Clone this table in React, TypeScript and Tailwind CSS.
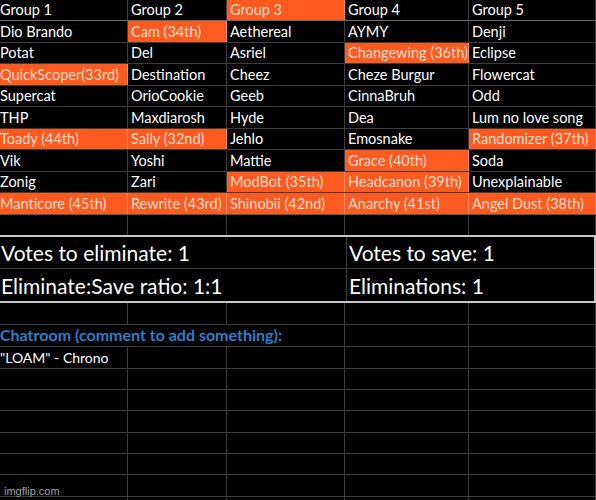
import React from 'react';

type Cell = { text: string; hot?: boolean };

const cols = 'grid grid-cols-[128px_99px_118px_124px_127px]';
const font = { fontFamily: 'Lato, "Open Sans", sans-serif' };

const header: Cell[] = [
  { text: 'Group 1' },
  { text: 'Group 2' },
  { text: 'Group 3', hot: true },
  { text: 'Group 4' },
  { text: 'Group 5' },
];

// orange = eliminated
const rows: Cell[][] = [
  [{ text: 'Dio Brando' }, { text: 'Cam (34th)', hot: true }, { text: 'Aethereal' }, { text: 'AYMY' }, { text: 'Denji' }],
  [{ text: 'Potat' }, { text: 'Del' }, { text: 'Asriel' }, { text: 'Changewing (36th)', hot: true }, { text: 'Eclipse' }],
  [{ text: 'QuickScoper(33rd)', hot: true }, { text: 'Destination' }, { text: 'Cheez' }, { text: 'Cheze Burgur' }, { text: 'Flowercat' }],
  [{ text: 'Supercat' }, { text: 'OrioCookie' }, { text: 'Geeb' }, { text: 'CinnaBruh' }, { text: 'Odd' }],
  [{ text: 'THP' }, { text: 'Maxdiarosh' }, { text: 'Hyde' }, { text: 'Dea' }, { text: 'Lum no love song' }],
  [{ text: 'Toady (44th)', hot: true }, { text: 'Sally (32nd)', hot: true }, { text: 'Jehlo' }, { text: 'Emosnake' }, { text: 'Randomizer (37th)', hot: true }],
  [{ text: 'Vik' }, { text: 'Yoshi' }, { text: 'Mattie' }, { text: 'Grace (40th)', hot: true }, { text: 'Soda' }],
  [{ text: 'Zonig' }, { text: 'Zari' }, { text: 'ModBot (35th)', hot: true }, { text: 'Headcanon (39th)', hot: true }, { text: 'Unexplainable' }],
  [{ text: 'Manticore (45th)', hot: true }, { text: 'Rewrite (43rd)', hot: true }, { text: 'Shinobii (42nd)', hot: true }, { text: 'Anarchy (41st)', hot: true }, { text: 'Angel Dust (38th)', hot: true }],
];
const rowHeights = ['h-[22px]', 'h-[21px]', 'h-[22px]', 'h-[21px]', 'h-[22px]', 'h-[21px]', 'h-[22px]', 'h-[21px]', 'h-[22px]'];
const tailHeights = ['h-[22px]', 'h-[22px]', 'h-[22px]', 'h-[21px]', 'h-[21px]', 'h-[22px]', 'h-[21px]', 'h-[21px]', 'h-[22px]', 'h-[22px]'];

function GridRow({ cells, h, bottom = 'border-[#3c3c3c]' }: { cells: Cell[]; h: string; bottom?: string }) {
  return (
    <div className={`${cols} ${h} border-b ${bottom}`}>
      {cells.map((c, i) => (
        <div
          key={i}
          className={`flex items-end overflow-hidden whitespace-nowrap border-r pb-[3px] text-[14.5px] leading-none ${
            i === 0 ? 'pl-0' : 'pl-[3px]'
          } ${c.hot ? 'bg-[#ff5a1f] text-[#ffdccb] border-[#ff8c60]' : 'text-white border-[#3c3c3c]'}`}
        >
          {c.text}
        </div>
      ))}
    </div>
  );
}

function EmptyRow({ h }: { h: string }) {
  return (
    <div className={`${cols} ${h} border-b border-[#3c3c3c]`}>
      {[0, 1, 2, 3, 4].map(i => (
        <div key={i} className="border-r border-[#3c3c3c]" />
      ))}
    </div>
  );
}

export default function App() {
  return (
    <div className="relative w-[596px] h-[500px] overflow-hidden bg-black" style={font}>
      <GridRow cells={header} h="h-[21px]" bottom="border-[#6b6b6b]" />
      {rows.map((r, i) => (
        <GridRow key={i} cells={r} h={rowHeights[i]} bottom={i === rows.length - 1 ? 'border-[#5a5a5a]' : 'border-[#3c3c3c]'} />
      ))}

      {/* blank row above the box */}
      <div className={`${cols} h-[20px]`}>
        {[0, 1, 2, 3, 4].map(i => (
          <div key={i} className="border-r border-[#3c3c3c]" />
        ))}
      </div>

      {/* vote totals */}
      <div className="-ml-[2px] w-[598px] border-2 border-[#c8c8c8] text-white text-[21px] leading-none">
        <div className="grid grid-cols-[347px_249px] h-[32px] border-b border-[#3c3c3c]">
          <div className="flex items-end border-r border-[#3c3c3c] pb-[5px] pl-[1px] whitespace-nowrap">Votes to eliminate: 1</div>
          <div className="flex items-end pb-[5px] pl-[2px] whitespace-nowrap">Votes to save: 1</div>
        </div>
        <div className="grid grid-cols-[347px_249px] h-[32px]">
          <div className="flex items-end border-r border-[#3c3c3c] pb-[5px] pl-[1px] whitespace-nowrap">Eliminate:Save ratio: 1:1</div>
          <div className="flex items-end pb-[5px] pl-[2px] whitespace-nowrap">Eliminations: 1</div>
        </div>
      </div>

      <EmptyRow h={tailHeights[0]} />
      <div className={`grid grid-cols-[345px_124px_127px] ${tailHeights[1]} border-b border-[#3c3c3c]`}>
        <div className="flex items-end border-r border-[#3c3c3c] pb-[3px] text-[16px] font-bold leading-none text-[#2d7fc9] whitespace-nowrap">
          Chatroom (comment to add something):
        </div>
        <div className="border-r border-[#3c3c3c]" />
        <div className="border-r border-[#3c3c3c]" />
      </div>
      <div className={`${cols} ${tailHeights[2]} border-b border-[#3c3c3c]`}>
        <div className="flex items-end overflow-visible border-r border-[#3c3c3c] pb-[3px] text-[14px] leading-none text-white whitespace-nowrap">
          "LOAM" - Chrono
        </div>
        {[1, 2, 3, 4].map(i => (
          <div key={i} className="border-r border-[#3c3c3c]" />
        ))}
      </div>
      {tailHeights.slice(3).map((h, i) => (
        <EmptyRow key={i} h={h} />
      ))}

      <div className="absolute left-[4px] bottom-[3px] text-[11px] leading-none text-[#a0a0a0]" style={{ fontFamily: '"Liberation Sans", Arial, sans-serif' }}>
        imgflip.com
      </div>
    </div>
  );
}
